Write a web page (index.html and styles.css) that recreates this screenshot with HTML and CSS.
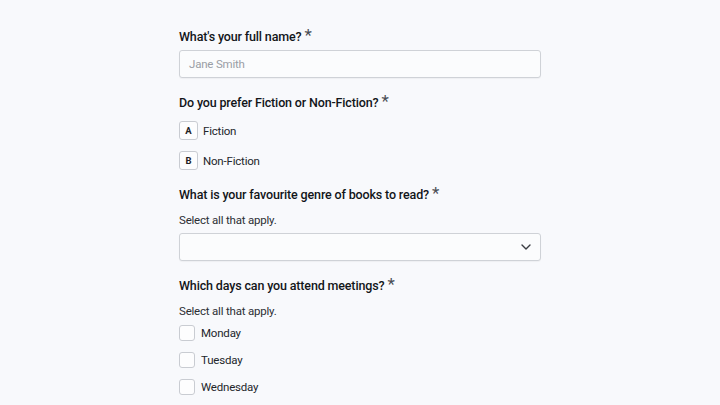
FILE: index.html
```html
<!DOCTYPE html>
<html lang="en">
<head>
<meta charset="utf-8">
<title>Book club form</title>
<link rel="stylesheet" href="styles.css">
</head>
<body>
<main class="form">
  <section class="question">
    <h2 class="q-title">What's your full name?<span class="req">*</span></h2>
    <div class="text-input"><span class="placeholder">Jane Smith</span></div>
  </section>

  <section class="question">
    <h2 class="q-title">Do you prefer Fiction or Non-Fiction?<span class="req">*</span></h2>
    <div class="choices">
      <div class="choice"><span class="key">A</span><span class="choice-label">Fiction</span></div>
      <div class="choice"><span class="key">B</span><span class="choice-label">Non-Fiction</span></div>
    </div>
  </section>

  <section class="question">
    <h2 class="q-title">What is your favourite genre of books to read?<span class="req">*</span></h2>
    <p class="hint">Select all that apply.</p>
    <div class="select-input">
      <svg class="chevron" width="12" height="12" viewBox="0 0 12 12"><path d="M2 4l4 4 4-4" fill="none" stroke="#3a3d42" stroke-width="1.4" stroke-linecap="round" stroke-linejoin="round"/></svg>
    </div>
  </section>

  <section class="question">
    <h2 class="q-title">Which days can you attend meetings?<span class="req">*</span></h2>
    <p class="hint">Select all that apply.</p>
    <div class="checks">
      <div class="check"><span class="box"></span><span class="check-label">Monday</span></div>
      <div class="check"><span class="box"></span><span class="check-label">Tuesday</span></div>
      <div class="check"><span class="box"></span><span class="check-label">Wednesday</span></div>
    </div>
  </section>
</main>
</body>
</html>
```

FILE: styles.css
```css
* { box-sizing: border-box; }
html, body {
  margin: 0;
  padding: 0;
  background: #f8f9fc;
  font-family: Roboto, "Liberation Sans", Arial, sans-serif;
  color: #1d2024;
}
.form {
  width: 362px;
  margin: 0 auto;
  padding-top: 27px;
  display: flex;
  flex-direction: column;
  gap: 15px;
}
.question {
  display: flex;
  flex-direction: column;
}
.q-title {
  margin: 0;
  font-size: 12.5px;
  letter-spacing: -0.15px;
  line-height: 20px;
  font-weight: 500;
  color: #121519;
}
.req {
  display: inline-block;
  margin-left: 3px;
  font-size: 17px;
  line-height: 12px;
  vertical-align: top;
  font-weight: 400;
  color: #4a4e55;
  position: relative;
  top: 2px;
}
.text-input, .select-input {
  margin-top: 3px;
  height: 28px;
  border: 1px solid #cfd2d7;
  border-radius: 3px;
  background: #fbfcfd;
  box-shadow: 0 1px 1px rgba(0,0,0,0.04);
  display: flex;
  align-items: center;
}
.text-input { padding-left: 9px; }
.placeholder {
  font-size: 11.5px;
  letter-spacing: -0.2px;
  color: #9a9ea5;
}
.select-input {
  margin-top: 5px;
  justify-content: flex-end;
  padding-right: 8px;
}
.choices {
  margin-top: 8px;
  display: flex;
  flex-direction: column;
  gap: 11px;
}
.choice {
  display: flex;
  align-items: center;
  gap: 5px;
}
.key {
  width: 19px;
  height: 19px;
  border: 1px solid #c9ccd2;
  border-radius: 3px;
  background: #fdfdfe;
  display: flex;
  align-items: center;
  justify-content: center;
  font-size: 9.5px;
  font-weight: 700;
  color: #1f2226;
}
.choice-label, .check-label {
  font-size: 11.5px;
  letter-spacing: -0.2px;
  color: #23262b;
}
.hint {
  margin: 7px 0 0;
  font-size: 11.5px;
  letter-spacing: -0.2px;
  line-height: 16px;
  color: #2c2f34;
}
.checks {
  margin-top: 6px;
  display: flex;
  flex-direction: column;
  gap: 11px;
}
.check {
  display: flex;
  align-items: center;
  gap: 6px;
}
.box {
  width: 16px;
  height: 16px;
  border: 1px solid #c9ccd2;
  border-radius: 3px;
  background: #fdfdfe;
}
```
